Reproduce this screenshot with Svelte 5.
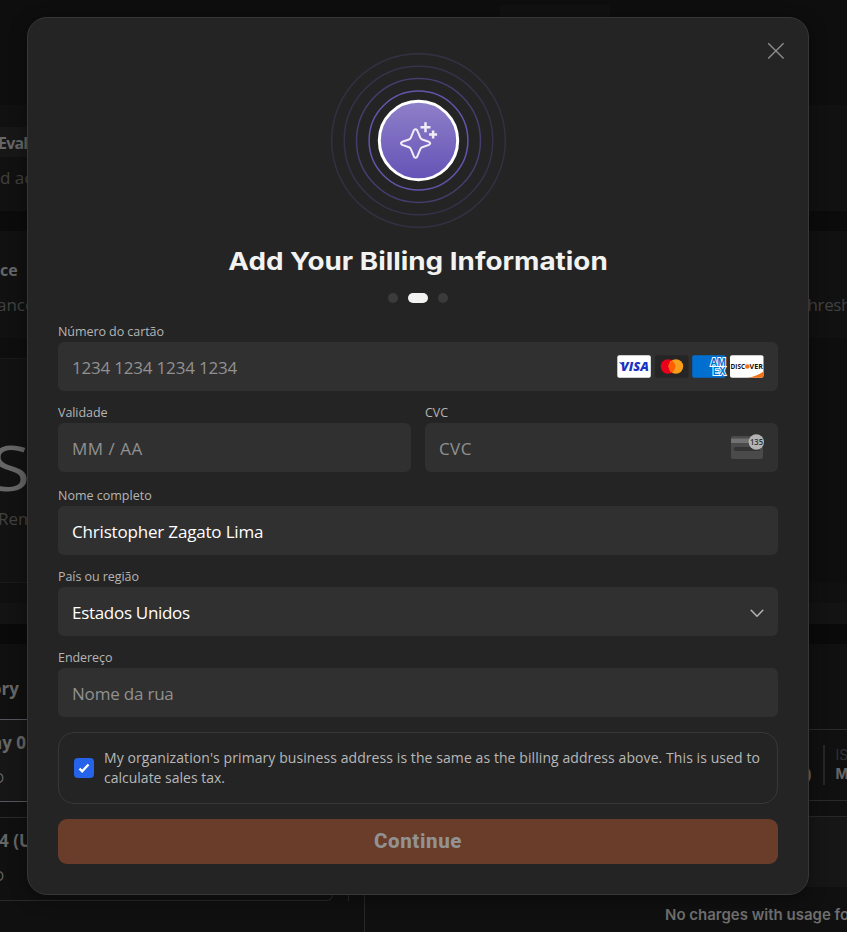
<script>
  const rings = [
    { r: 86.8, color: '#343041' },
    { r: 74.3, color: '#37314a' },
    { r: 62, color: '#473c6d' },
    { r: 49.4, color: '#6554ab' }
  ];
  let same = $state(true);
</script>

<div class="screen">
  <div class="page" aria-hidden="true">
    <div class="band top"><i></i></div>
    <div class="band card a">
      <b class="tag">Eval</b>
      <span class="sub">d ac</span>
    </div>
    <div class="band gap"></div>
    <div class="band card b">
      <b>ce</b>
      <div class="split"><span>ance</span><span class="right">hresh</span></div>
    </div>
    <div class="band plain"></div>
    <div class="band usage"><span class="huge">S</span><span class="rem">Rem</span></div>
    <div class="band foot"></div>
    <div class="band strip"></div>
    <div class="band dark"></div>
    <div class="lower">
      <div class="history">
        <b class="ory">ory</b>
        <div class="row sel"><b>ay 0</b><span>D</span></div>
        <div class="row next"><b>4 (U</b><span>D</span></div>
      </div>
      <div class="stub"></div>
      <div class="detail">
        <div class="issue"><b class="paren">)</b><i></i><p><span>IS</span><b>M</b></p></div>
        <div class="panel"></div>
        <b class="none">No charges with usage for</b>
      </div>
    </div>
  </div>

  <main class="modal">
    <button class="close" aria-label="Close">
      <svg width="18" height="18" viewBox="0 0 18 18"><path d="M1.2 1.2 16.6 16.6M16.6 1.2 1.2 16.6" stroke="#8b8b8b" stroke-width="1.4" fill="none" /></svg>
    </button>

    <svg class="hero" width="176" height="176" viewBox="0 0 176 176">
      <defs>
        <linearGradient id="orb" x1="0" y1="0" x2="0" y2="1">
          <stop offset="0" stop-color="#8f80c9" />
          <stop offset="1" stop-color="#6553b6" />
        </linearGradient>
      </defs>
      {#each rings as ring}
        <circle cx="87.5" cy="87.5" r={ring.r} fill="none" stroke={ring.color} stroke-width="1.5" />
      {/each}
      <circle cx="87.5" cy="87.5" r="39.2" fill="url(#orb)" stroke="#fff" stroke-width="3" />
      <g fill="none" stroke="#f0edf8" stroke-linecap="round" stroke-linejoin="round">
        <path stroke-width="2" d="M82.9 77.1Q84.6 75.3 86.1 77.1L89.3 84.7Q89.8 86.1 91.2 86.5L97.9 88.8Q100.6 90.3 97.9 91.9L91.2 94.2Q89.8 94.7 89.3 96.1L86.1 103.9Q84.6 105.7 83.1 103.9L79.9 96.1Q79.4 94.7 78 94.2L71.2 91.9Q68.7 90.3 71.2 88.8L78 86.5Q79.4 86.1 79.9 84.7Z" />
        <path stroke-width="2.5" stroke-linecap="butt" d="M94.5 69.3V79.3M89.5 74.3H99.5M102.1 77.5V85.5M98.1 81.5H106.1" />
      </g>
    </svg>

    <h1>Add Your Billing Information</h1>
    <div class="dots"><i></i><i class="on"></i><i></i></div>

    <div class="field">
      <span class="label l1">Número do cartão</span>
      <div class="input">
        <span class="ph p1">1234 1234 1234 1234</span>
        <svg class="brands" width="148" height="23" viewBox="0 0 148 23" font-family="Open Sans, sans-serif">
          <rect x=".3" y=".2" width="33.5" height="22.6" rx="2" fill="#fff" />
          <path d="M1.8 7.2Q4.800 7 5.800 8.400L7.6 12Z" fill="#1a33c4" />
          <text x="3.8" y="16.2" font-size="12.600" font-weight="800" font-style="italic" fill="#1a33c4" textLength="28" lengthAdjust="spacingAndGlyphs">VISA</text>
          <rect x="38" y=".2" width="33.5" height="22.6" rx="2" fill="#252525" />
          <circle cx="51" cy="11.5" r="7.3" fill="#eb001b" />
          <circle cx="58.9" cy="11.5" r="7.3" fill="#f79e1b" />
          <path d="M54.95 5.4a7.3 7.3 0 0 1 0 12.2a7.3 7.3 0 0 1 0-12.2Z" fill="#ff5f00" />
          <rect x="75.2" y=".2" width="33.5" height="22.6" rx="2" fill="#006fcf" />
          <g font-size="10.500" font-weight="700" fill="#006fcf" stroke="#fff" stroke-width="1.900" paint-order="stroke" font-family="Liberation Sans, sans-serif">
            <text x="93.200" y="11.300" textLength="15.500" lengthAdjust="spacingAndGlyphs">AM</text>
            <text x="95.800" y="19.600" textLength="13" lengthAdjust="spacingAndGlyphs">EX</text>
          </g>
          <rect x="113" y=".2" width="33.5" height="22.6" rx="2" fill="#fff" />
          <path d="M146.5 16.5V20.8a2 2 0 0 1-2 2H131Q140.500 20.800 146.500 16.500Z" fill="#f47216" />
          <g font-size="6.8" font-weight="700" fill="#111">
            <text x="113.6" y="14" textLength="14.500" lengthAdjust="spacingAndGlyphs">DISC</text>
            <text x="132.6" y="14" textLength="13.3" lengthAdjust="spacingAndGlyphs">VER</text>
          </g>
          <circle cx="130.300" cy="11.500" r="2.3" fill="#f47216" />
        </svg>
      </div>
    </div>

    <div class="pair">
      <div class="field">
        <span class="label l2">Validade</span>
        <div class="input"><span class="ph p2">MM / AA</span></div>
      </div>
      <div class="field">
        <span class="label l3">CVC</span>
        <div class="input">
          <span class="ph p3">CVC</span>
          <svg class="cvc" width="34" height="26" viewBox="0 0 34 26">
            <rect x="1" y="2" width="32" height="23" rx="2" fill="#4a4a4a" />
            <rect x="1" y="4.5" width="32" height="4.5" fill="#717171" />
            <rect x="4" y="13" width="26" height="4" rx="1.5" fill="#333" />
            <circle cx="26.3" cy="8" r="7.700" fill="#b4b4b4" />
            <text x="20" y="11.200" font-family="Open Sans, sans-serif" font-size="9" font-weight="600" fill="#303030" textLength="13" lengthAdjust="spacingAndGlyphs">135</text>
          </svg>
        </div>
      </div>
    </div>

    <div class="field name">
      <span class="label l4">Nome completo</span>
      <div class="input"><span class="val v1">Christopher Zagato Lima</span></div>
    </div>
    <div class="field">
      <span class="label l5">País ou região</span>
      <div class="input">
        <span class="val v2">Estados Unidos</span>
        <svg class="chev" width="14" height="9" viewBox="0 0 14 9"><path d="M1.200 1.300 7 7.200 12.800 1.300" fill="none" stroke="#b5b5b5" stroke-width="1.5" stroke-linecap="round" stroke-linejoin="round" /></svg>
      </div>
    </div>
    <div class="field">
      <span class="label l6">Endereço</span>
      <div class="input"><span class="ph p4">Nome da rua</span></div>
    </div>

    <div class="consent">
      <button class="check" role="checkbox" aria-checked={same} aria-label="Same address" onclick={() => (same = !same)}>
        {#if same}
          <svg width="12" height="10" viewBox="0 0 12 10"><path d="M1.500 5.600 4.200 8.300 10.500 1.500" fill="none" stroke="#fff" stroke-width="2.300" /></svg>
        {/if}
      </button>
      <p><span class="c1">My organization's primary business address is the same as the billing address above. This is used to</span><br /><span class="c2">calculate sales tax.</span></p>
    </div>

    <button class="go"><span>Continue</span></button>
  </main>
</div>

<style>
  :global(body) { background: #0e0e0e; }
  .screen { position: relative; width: 847px; height: 932px; overflow: hidden; font-family: 'Open Sans', 'Noto Sans', sans-serif; }
  .screen * { box-sizing: border-box; }
  p { margin: 0; }

  .page { color: #666; font-size: 16px; line-height: 20px; white-space: nowrap; }
  .band { overflow: hidden; background: #0e0e0e; }
  .top { height: 105px; padding: 5px 0 0 500px; }
  .top i { display: block; width: 110px; height: 13px; background: #111; }
  .card { background: #111; display: flex; flex-direction: column; }
  .a { height: 106px; padding-top: 22px; }
  .tag { width: 40px; height: 30px; line-height: 32px; background: #171717; text-indent: -2px; letter-spacing: -0.8px; }
  .sub { margin-top: 11px; color: #414141; font-size: 17px; }
  .gap { height: 20px; background: #0b0b0b; }
  .b { height: 107px; padding-top: 29px; }
  .split { display: flex; margin: 15px 0 0 -3px; color: #414141; font-size: 17px; }
  .split .right { margin-left: 773px; letter-spacing: -0.4px; }
  .plain { height: 20px; }
  .usage { height: 225px; width: 780px; background: #121212; border-top: 1px solid #191919; border-bottom: 1px solid #1a1a1a; display: flex; flex-direction: column; color: #414141; }
  .huge { margin: 78px 0 0 -10px; font: 62px/60px 'Open Sans', sans-serif; color: #666; transform: scaleX(1.18); transform-origin: 0 0; width: 34px; }
  .rem { margin: 12px 0 0 -2px; font-size: 17px; }
  .foot { height: 20px; background: #101010; }
  .strip { height: 21px; background: #131313; }
  .dark { height: 20px; background: #0a0a0a; }
  .lower { display: flex; height: 288px; background: #101010; }
  .history { width: 333px; flex: none; }
  .ory { display: block; height: 75px; padding-top: 35px; margin-left: -9px; font-size: 17px; }
  .row { display: flex; flex-direction: column; border: 1px solid #2a2a2a; border-left: 0; height: 84px; }
  .row b { margin: 13px 0 0 -1px; font-size: 17px; }
  .row span { margin: 15px 0 0 -6px; font-size: 14px; }
  .row.sel { height: 83px; background: #161616; border-color: #55565d; margin-bottom: 15px; }
  .sel b { margin-left: -8px; }
  .next { border-radius: 0 0 6px 0; }
  .stub { width: 32px; height: 257px; flex: none; border-left: 1px solid #2a2a2a; margin-left: 15px; margin-right: -16px; }
  .detail { flex: 1; min-width: 0; border-left: 1px solid #282828; padding-top: 85px; }
  .issue { display: flex; height: 72px; border: solid #2a2a2a; border-width: 1px 0; padding: 15px 0 0 441px; }
  .paren { padding-top: 19px; font-size: 16px; }
  .issue i { flex: none; width: 2px; height: 40px; margin: 0 10px 0 12px; background: #262626; }
  .issue p { display: flex; flex-direction: column; font: 14px/19px Inter, sans-serif; }
  .issue p span { color: #303038; }
  .panel { height: 71px; margin-top: 15px; background: #161616; border-top: 1px solid #282828; }
  .none { display: block; margin: 18px 0 0 300px; font: 600 15px/20px Inter, sans-serif; color: #6e6e6e; }

  .modal { position: absolute; left: 27px; top: 17px; width: 782px; height: 878px; padding: 35px 30px 0; background: #242424; border: 1px solid #373737; border-radius: 20px; display: flex; flex-direction: column; box-shadow: 0 4px 18px #0006; }
  button { border: 0; padding: 0; font: inherit; display: grid; place-items: center; }
  .close { position: absolute; right: 23px; top: 24px; background: none; width: 18px; height: 18px; }
  .hero { align-self: center; margin-left: 1px; flex: none; }
  h1 { height: 34px; margin: 15px 0 0; font: 700 24.5px/34px Inter, sans-serif; color: #f2f2f1; text-align: center; white-space: nowrap; transform: scaleX(1.136); }
  .dots { display: flex; justify-content: center; gap: 10px; margin: 15px 0 19px; }
  .dots i { width: 10px; height: 10px; border-radius: 5px; background: #3b3b3b; }
  .dots .on { width: 20px; background: #f2f2f1; }
  .field { display: flex; flex-direction: column; align-items: flex-start; }
  .field + .field { margin-top: 12px; }
  .pair { display: grid; grid-template-columns: 353px 353px; gap: 14px; margin-top: 12px; }
  .pair .field { margin: 0; }
  .field.name { margin-top: 14px; }
  .label { height: 20px; line-height: 19px; font-size: 12.5px; color: #b5b5b5; white-space: nowrap; letter-spacing: -0.06px; }
  .l4 { letter-spacing: 0; }
  .input { width: 100%; height: 49px; background: #303030; border-radius: 6px; display: flex; align-items: center; justify-content: space-between; padding: 0 13px 0 14px; font-size: 17px; white-space: nowrap; }
  .ph { color: #919191; padding-top: 1px; }
  .val { color: #fff; padding-top: 1px; }
  .p1 { letter-spacing: -0.2px; }
  .p2 { letter-spacing: 0.5px; }
  .p3 { letter-spacing: 0.4px; }
  .p4 { letter-spacing: -0.2px; }
  .v1 { letter-spacing: -0.18px; }
  .v2 { letter-spacing: -0.3px; }
  .cvc { margin: -2px 1px 0 0; }
  .chev { margin: 3px 1px 0 0; }
  .consent { margin-top: 15px; height: 72px; border: 1px solid #373737; border-radius: 16px; display: flex; align-items: center; padding: 0 15px; gap: 10px; color: #b8b8b8; font-size: 14px; line-height: 20px; white-space: nowrap; }
  .c1 { letter-spacing: 0.08px; }
  .check { width: 20px; height: 20px; border-radius: 4px; background: #2563eb; flex: none; }
  .go { margin-top: 15px; height: 45px; border-radius: 9px; background: #693d2a; color: #929292; font: 800 20.5px/24px Roboto, sans-serif; letter-spacing: 0.6px; padding-bottom: 2px; }
</style>
